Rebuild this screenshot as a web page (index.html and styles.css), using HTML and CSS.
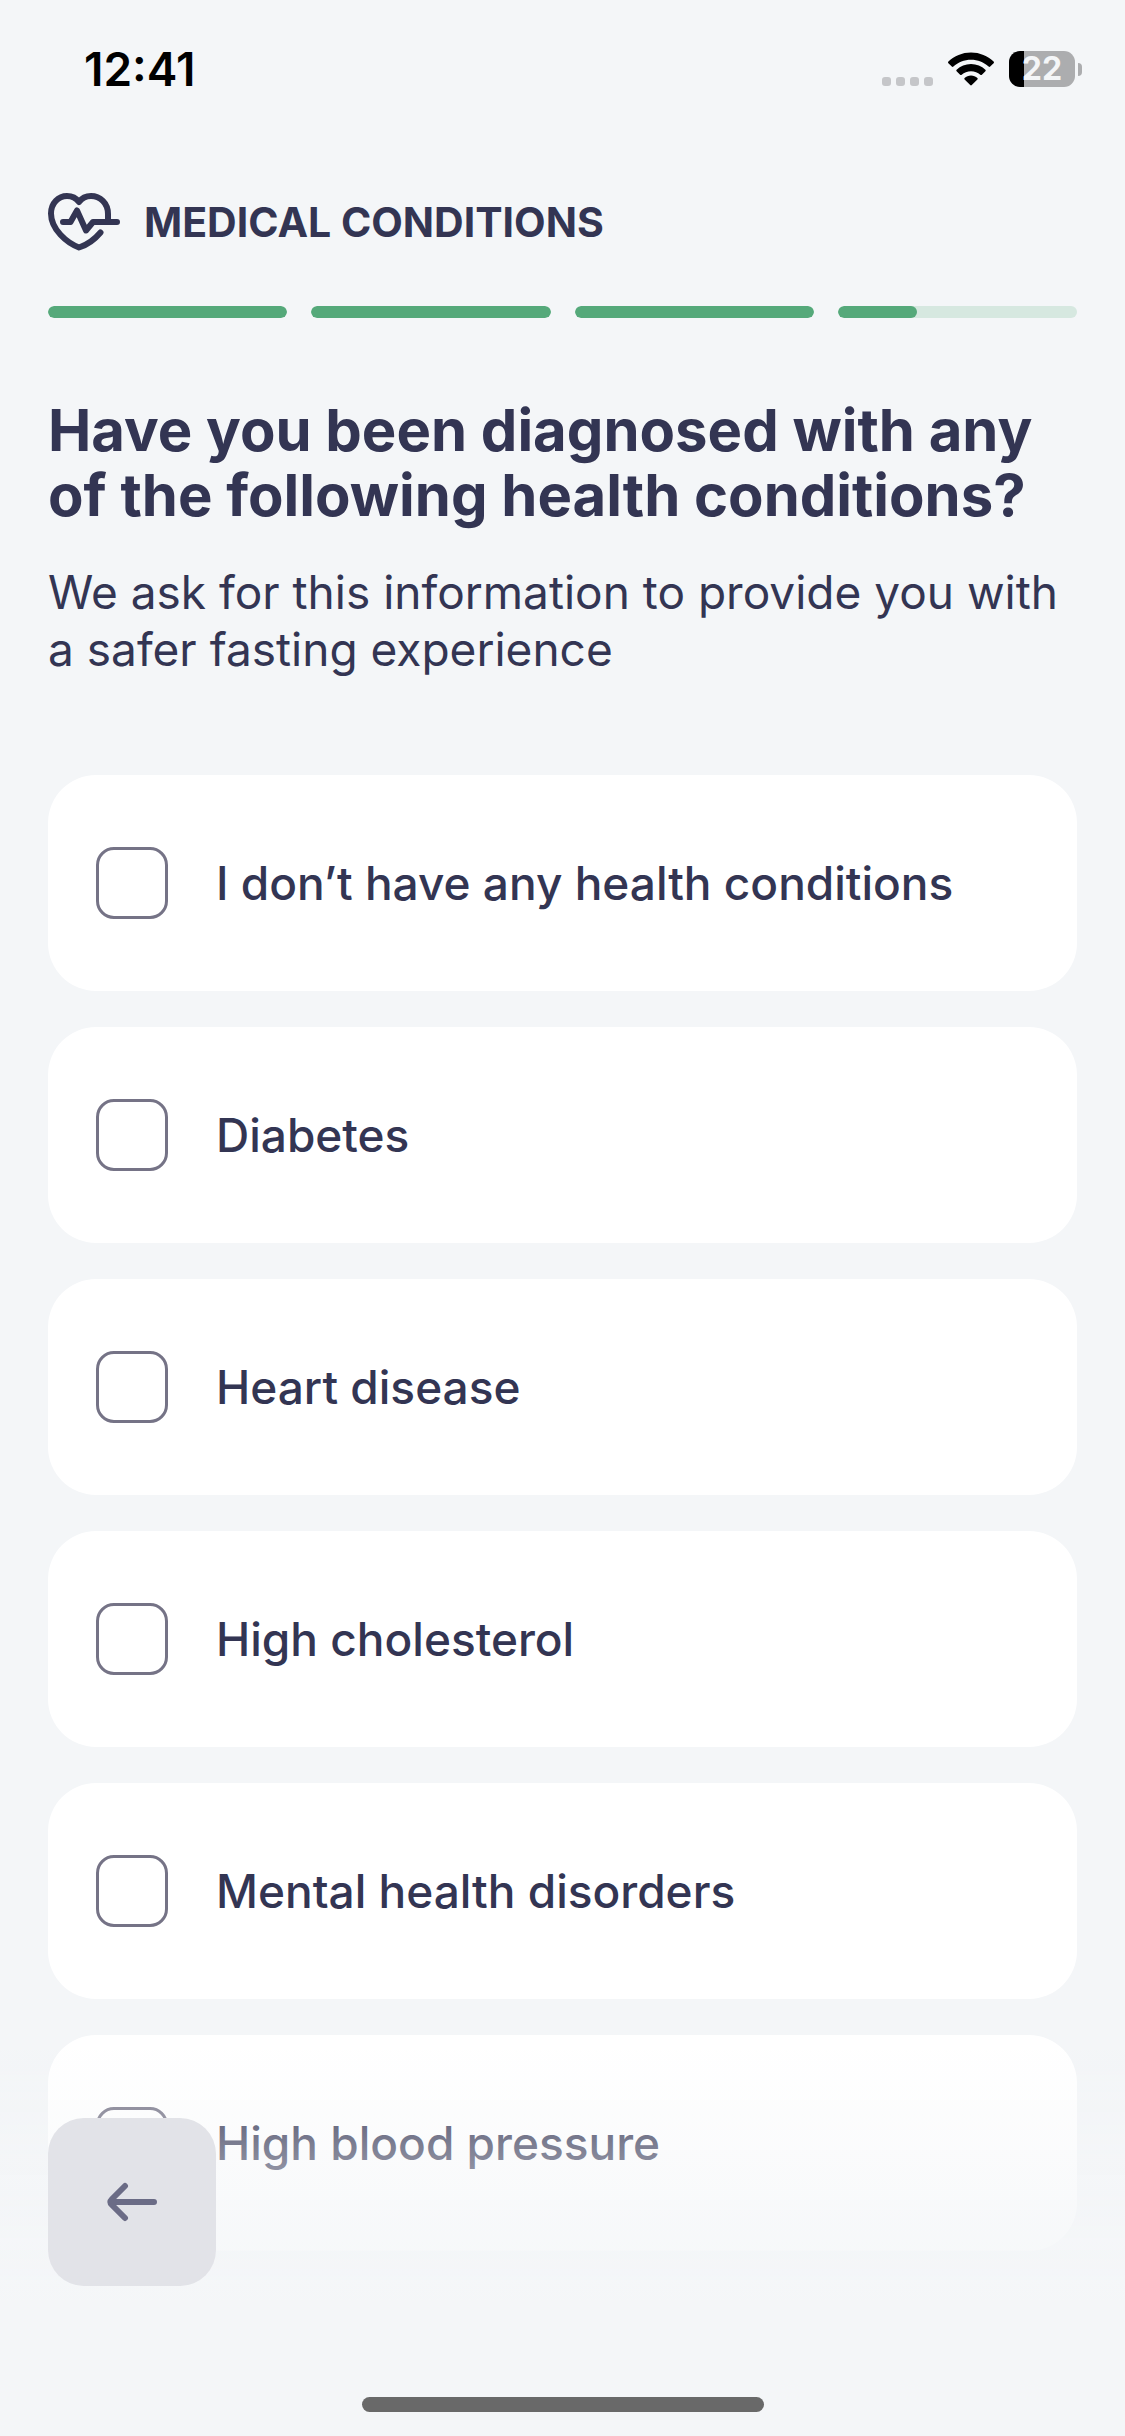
FILE: index.html
```html
<!DOCTYPE html>
<html lang="en">

<head>
  <meta charset="UTF-8">
  <meta name="viewport" content="width=device-width, initial-scale=1.0">
  <title>Medical conditions</title>
  <link rel="stylesheet" href="styles.css">
</head>

<body>
  <div class="status-bar">
    <time class="clock" datetime="12:41">12:41</time>
    <div class="status-icons">
      <svg class="signal" viewBox="0 0 51 34" aria-hidden="true">
        <rect x="0" y="25" width="9" height="9" rx="3" />
        <rect x="14" y="25" width="9" height="9" rx="3" />
        <rect x="28" y="25" width="9" height="9" rx="3" />
        <rect x="42" y="25" width="9" height="9" rx="3" />
      </svg>
      <svg class="wifi" viewBox="0 0 46 34" aria-hidden="true">
        <path d="M23 0.500C31.800 0.500 39.800 3.900 45.600 9.600C46.100 10.100 46.100 10.700 45.600 11.200L42.200 14.600C41.700 15.100 41.100 15.100 40.600 14.600C35.900 10.200 29.700 7.700 23 7.700S10.100 10.200 5.400 14.600C4.900 15.100 4.300 15.100 3.800 14.600L0.400 11.200C-0.100 10.700 -0.100 10.100 0.400 9.600C6.200 3.900 14.200 0.500 23 0.500Z" />
        <path d="M23 12C28.500 12 33.600 14.100 37.400 17.700C37.900 18.200 37.900 18.800 37.400 19.300L33.900 22.700C33.400 23.200 32.900 23.200 32.300 22.700C29.800 20.500 26.600 19.200 23 19.200S16.200 20.500 13.700 22.700C13.100 23.200 12.600 23.200 12.100 22.700L8.600 19.300C8.100 18.800 8.100 18.200 8.600 17.700C12.400 14.100 17.500 12 23 12Z" />
        <path d="M23 23.500C25.500 23.500 27.700 24.400 29.400 25.900C29.900 26.400 29.900 26.900 29.400 27.400L23.800 33C23.300 33.500 22.700 33.500 22.200 33L16.600 27.400C16.100 26.900 16.100 26.400 16.600 25.900C18.300 24.400 20.500 23.500 23 23.500Z" />
      </svg>
      <div class="battery">
        <span class="battery-level">22</span>
        <span class="battery-tip"></span>
      </div>
    </div>
  </div>

  <main class="screen">
    <header class="section-title">
      <svg class="heart-icon" viewBox="0 0 72 58" aria-hidden="true">
        <path d="M52.500 39.500C47 46 39 52 31 54.500C19 50 3 36.500 3 20.500C3 10 10.500 3 19 3C24 3 28.500 5.500 31 9C33.500 5.500 38 3 43 3C52 3 60 10 60 21V27" />
        <path d="M15 29H22.500L29 17.500L38 37.500L45 29H69" />
      </svg>
      <span>MEDICAL CONDITIONS</span>
    </header>

    <div class="progress">
      <span class="step done"></span>
      <span class="step done"></span>
      <span class="step done"></span>
      <span class="step current"></span>
    </div>

    <form>
      <h1>Have you been diagnosed with any of the following health conditions?</h1>
      <p class="hint">We ask for this information to provide you with a safer fasting experience</p>

      <div class="options">
        <label class="option">
          <input type="checkbox" name="condition" value="none">
          <span>I don’t have any health conditions</span>
        </label>
        <label class="option">
          <input type="checkbox" name="condition" value="diabetes">
          <span>Diabetes</span>
        </label>
        <label class="option">
          <input type="checkbox" name="condition" value="heart">
          <span>Heart disease</span>
        </label>
        <label class="option">
          <input type="checkbox" name="condition" value="cholesterol">
          <span>High cholesterol</span>
        </label>
        <label class="option">
          <input type="checkbox" name="condition" value="mental">
          <span>Mental health disorders</span>
        </label>
        <label class="option">
          <input type="checkbox" name="condition" value="pressure">
          <span>High blood pressure</span>
        </label>
      </div>
    </form>
  </main>

  <!-- stays over the list, options fade out under it -->
  <footer class="bottom-bar">
    <button type="button" class="back" aria-label="Back">
      <svg viewBox="0 0 50 40" aria-hidden="true">
        <path d="M47 20H4M18 4L5 17Q2 20 5 23L18 36" />
      </svg>
    </button>
    <span class="home-indicator"></span>
  </footer>
</body>

</html>
```
FILE: styles.css
```css
* {
  box-sizing: border-box;
}

body {
  margin: 0;
  min-height: 100vh;
  background: #f4f6f8;
  color: #333553;
  font-family: "Inter", "Liberation Sans", sans-serif;
}

.status-bar {
  display: flex;
  justify-content: space-between;
  align-items: center;
  height: 138px;
  padding: 0 43px 0 84px;
  color: #000;
}

.clock {
  font-size: 46px;
  font-weight: 600;
}

.status-icons {
  display: flex;
  align-items: center;
  gap: 15px;
}

.signal {
  width: 51px;
  height: 34px;
  fill: #c5c6c9;
}

.wifi {
  width: 46px;
  height: 34px;
}

.battery {
  display: flex;
  align-items: center;
  gap: 3px;
}

.battery-level {
  width: 66px;
  height: 36px;
  border-radius: 11px;
  background: linear-gradient(to right, #000 15px, #acadaf 15px);
  color: #f4f6f8;
  font-size: 32px;
  font-weight: 700;
  line-height: 36px;
  text-align: center;
}

.battery-tip {
  width: 4px;
  height: 13px;
  border-radius: 0 4px 4px 0;
  background: #acadaf;
}

.screen {
  padding: 54px 48px 186px;
}

.section-title {
  display: flex;
  align-items: center;
  gap: 24px;
  height: 60px;
  font-size: 41px;
  font-weight: 700;
}

.heart-icon {
  width: 72px;
  height: 58px;
  fill: none;
  stroke: #333553;
  stroke-width: 6;
  stroke-linecap: round;
  stroke-linejoin: round;
}

.progress {
  display: flex;
  gap: 24px;
  margin-top: 54px;
}

.step {
  flex: 1;
  height: 12px;
  border-radius: 6px;
  background: #d6e8e0;
  overflow: hidden;
}

.step::before {
  content: "";
  display: block;
  height: 100%;
  border-radius: 6px;
  background: #55a97a;
}

.step.current::before {
  width: 33%;
}

h1 {
  margin: 80px 0 0;
  font-size: 58px;
  font-weight: 700;
  line-height: 65px;
}

.hint {
  margin: 36px 0 0;
  font-size: 46px;
  line-height: 57px;
}

.options {
  display: grid;
  gap: 36px;
  margin-top: 97px;
}

.option {
  display: flex;
  align-items: center;
  gap: 48px;
  padding: 72px 48px;
  border-radius: 48px;
  background: #fff;
  font-size: 46px;
  font-weight: 500;
  line-height: 56px;
}

.option input {
  appearance: none;
  flex: none;
  width: 72px;
  height: 72px;
  margin: 0;
  border: 3px solid #757386;
  border-radius: 18px;
}

.option input:checked {
  background: #55a97a;
}

.bottom-bar {
  position: fixed;
  left: 0;
  right: 0;
  bottom: 0;
  display: flex;
  flex-direction: column;
  justify-content: space-between;
  height: 386px;
  padding: 68px 48px 24px;
  background: linear-gradient(to bottom, rgba(244, 246, 248, 0), #f4f6f8 250px);
}

.back {
  display: grid;
  place-items: center;
  width: 168px;
  height: 168px;
  padding: 0;
  border: 0;
  border-radius: 36px;
  background: #e2e3e8;
}

.back svg {
  width: 50px;
  height: 40px;
  fill: none;
  stroke: #6b6c86;
  stroke-width: 6;
  stroke-linecap: round;
  stroke-linejoin: round;
}

.home-indicator {
  align-self: center;
  width: 402px;
  height: 15px;
  border-radius: 8px;
  background: #696969;
}
```
